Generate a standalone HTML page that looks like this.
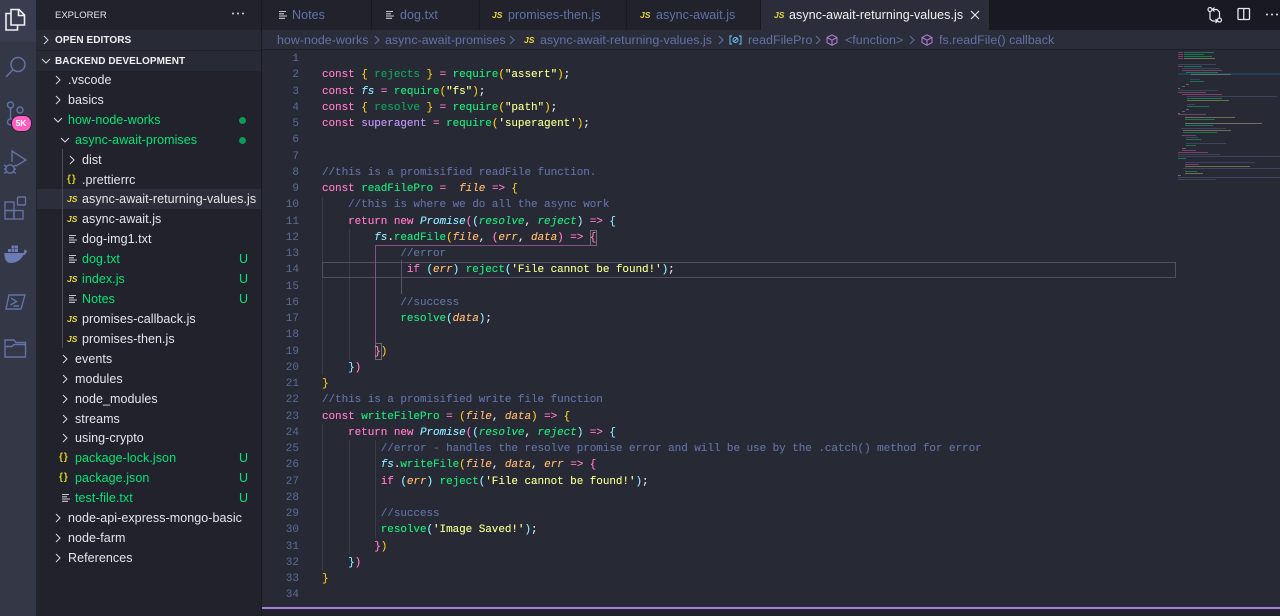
<!DOCTYPE html>
<html><head><meta charset="utf-8"><title>async-await-returning-values.js</title>
<style>
html,body{margin:0;padding:0;width:1280px;height:616px;overflow:hidden;background:#272935}
body{position:relative;font-family:"Liberation Sans",sans-serif}
div,span.a,svg.a{position:absolute}
#act{left:0;top:0;width:36px;height:616px;background:#343746}
#side{left:36px;top:0;width:226px;height:616px;background:#21222c;border-right:1px solid #191a21;box-sizing:border-box}
#tabs{left:262px;top:0;width:1018px;height:30px;background:#191a21}
.tab{top:0;height:30px;background:#21222c;border-right:1px solid #191a21;box-sizing:border-box;color:#6272a4;font-size:12.5px;letter-spacing:.06px;line-height:30px;white-space:pre}
.tab .t{position:absolute;top:0}
#crumb{left:262px;top:30px;width:1018px;height:20px;background:#2b2d3a;border-bottom:1px solid #1d1e27;box-sizing:border-box}
.c{position:absolute;top:0;line-height:20px;font-size:12.4px;letter-spacing:.04px;color:#6272a4;white-space:pre}
.r{left:36px;width:225px;height:20px;line-height:20px;font-size:12.5px;letter-spacing:.06px;color:#e6e6ea;white-space:pre}
.r .n{position:absolute;top:0}
.g{color:#00e676}
.st{position:absolute;left:203px;top:0;color:#00e676;font-size:12.5px}
.dot{position:absolute;left:203px;top:6.5px;width:7px;height:7px;border-radius:50%;background:#0c9a57}
.js{position:absolute;top:0;color:#e6d93a;font:bold 8.5px/20px "Liberation Sans",sans-serif;font-style:italic;letter-spacing:0}
.br{position:absolute;top:0;color:#d9cf1f;font:bold 10px/20px "Liberation Sans",sans-serif;letter-spacing:1px}
.hd{left:36px;width:225px;height:20px;background:#282a36;line-height:21px;font-size:10px;font-weight:bold;color:#f0f0f2;letter-spacing:.07px}
.ln{left:262px;width:37px;text-align:right;color:#5d6b9a;font:11px/16.25px "Liberation Mono",monospace}
.l{left:322px;height:16.25px;font:11px/16.25px "Liberation Mono",monospace;letter-spacing:-.07px;white-space:pre;color:#e8e8e8;text-shadow:0 0 .2px currentColor}
.k{color:#ff79c6}.f{color:#19e67a}.p{color:#ffb86c;font-style:italic}.s{color:#f1fa8c}.y{color:#f5c518}.cy{color:#8be9fd}.cyi{color:#8be9fd;font-style:italic}.v{color:#bd93f9}.dg{color:#10a05a}.cm{color:#5f6e9f}.gi{color:#19e67a;font-style:italic}
.ig{width:1px;background:#3a3c4a}
</style></head><body>
<svg width="0" height="0" style="position:absolute">
<defs>
<symbol id="cr" viewBox="0 0 10 10"><polyline points="3,1 7,5 3,9" fill="none" stroke="#d8d8de" stroke-width="1"/></symbol>
<symbol id="cd" viewBox="0 0 10 10"><polyline points="1,3 5,7 9,3" fill="none" stroke="#d8d8de" stroke-width="1"/></symbol>
<symbol id="tx" viewBox="0 0 10 10"><path d="M1 1.5h7M1 3.8h5M1 6h8M1 8.3h6" stroke="#c9c9cf" stroke-width="1.1" fill="none"/></symbol>
<symbol id="cube" viewBox="0 0 12 12"><path d="M6 .8 11 3.5V8.6L6 11.3 1 8.6V3.5ZM1 3.5 6 6.2 11 3.5M6 6.2V11.3" fill="none" stroke="#b57edc" stroke-width="1"/></symbol>
</defs></svg>

<div id="act">
<svg class="a" style="left:0;top:0" width="36" height="42"><rect width="36" height="42" fill="#3a3d4f"/><path d="M11 13.5H6V30H17.5V25M11 9.500H19L24.500 15V25H11ZM18.500 9.500V15.500H24.500" fill="none" stroke="#eeeef3" stroke-width="1.6"/></svg>
<svg class="a" style="left:0;top:50px" width="36" height="36"><circle cx="18" cy="14.500" r="7" fill="none" stroke="#6272a4" stroke-width="1.5"/><path d="M13 19.500 6 27" stroke="#6272a4" stroke-width="1.5"/></svg>
<svg class="a" style="left:0;top:98px" width="36" height="36"><g fill="none" stroke="#6272a4" stroke-width="1.4"><circle cx="10.5" cy="7" r="3"/><circle cx="20" cy="12" r="3"/><circle cx="10.5" cy="24" r="3"/><path d="M10.5 10V21"/></g></svg>
<div style="left:10.500px;top:115px;width:19px;height:15px;border-radius:8px;background:#ff5fc0;border:1px solid #23242e;color:#fff;font:bold 8.5px/15px 'Liberation Sans',sans-serif;text-align:center;box-sizing:content-box">5K</div>
<svg class="a" style="left:0;top:145px" width="36" height="36"><g fill="none" stroke="#6272a4" stroke-width="1.4"><path d="M12 17V6L26 15 16 21"/><circle cx="10" cy="24" r="4.2"/><path d="M4 20 7 22M4 24H6M4 28.5 7 26.5M16 20 13 22M16 24H14M16 28.5 13 26.5"/></g></svg>
<svg class="a" style="left:0;top:195px" width="36" height="30"><g fill="none" stroke="#6272a4" stroke-width="1.4"><rect x="5" y="7" width="9" height="8.5"/><rect x="5" y="15.5" width="9" height="8.5"/><rect x="14" y="15.5" width="9" height="8.5"/><rect x="17.5" y="2" width="8" height="8" rx="1"/></g></svg>
<svg class="a" style="left:0;top:240px" width="36" height="30"><path d="M4.5 13H22.5C24 13.5 24.5 12 24 10.5L25 9.5C26.500 10.500 27 11 27 11.500C25.800 14.500 24 15 23 15.500C21 20 16 23 11 23C6 23 4 18 4.500 13Z" fill="#6a7bb5"/><g fill="#6a7bb5"><rect x="8" y="9" width="3" height="3"/><rect x="11.500" y="9" width="3" height="3"/><rect x="15" y="9" width="3" height="3"/><rect x="11.500" y="5.500" width="3" height="3"/><rect x="15" y="5.500" width="3" height="3"/></g></svg>
<svg class="a" style="left:0;top:292px" width="36" height="30"><g fill="none" stroke="#6272a4" stroke-width="1.4"><path d="M9 3H25L21 17H6Z"/><path d="M11 6 16.500 9.500 10.500 13M13.500 14H19"/></g></svg>
<svg class="a" style="left:0;top:335px" width="36" height="30"><g fill="none" stroke="#6272a4" stroke-width="1.4"><path d="M5 8V5H14L16 7.500H25.500V22H5ZM5 11.500H12L14 9.500H25.500"/></g></svg>
</div>

<div id="side"></div>
<div style="left:55px;top:10px;color:#e4e4e8;font-size:9.5px;line-height:12px">EXPLORER</div>
<svg class="a" style="left:231px;top:11px" width="14" height="5"><g fill="#d8d8de"><circle cx="2" cy="2.500" r="1"/><circle cx="7" cy="2.500" r="1"/><circle cx="12" cy="2.500" r="1"/></g></svg>
<div class="hd" style="top:30px"><svg class="a" style="left:5px;top:5px" width="10" height="10"><use href="#cr"/></svg><span style="position:absolute;left:19px">OPEN EDITORS</span></div>
<div class="hd" style="top:51px"><svg class="a" style="left:5px;top:5px" width="10" height="10"><use href="#cd"/></svg><span style="position:absolute;left:19px">BACKEND DEVELOPMENT</span></div>

<div style="left:37px;top:189px;width:224px;height:20px;background:#2c2e3b"></div>
<div style="left:62px;top:149px;width:1px;height:199px;background:#4a4c5a"></div>

<div class="r" style="top:70px"><svg class="a" style="left:17px;top:5px" width="10" height="10"><use href="#cr"/></svg><span class="n" style="left:32px">.vscode</span></div>
<div class="r" style="top:90px"><svg class="a" style="left:17px;top:5px" width="10" height="10"><use href="#cr"/></svg><span class="n" style="left:32px">basics</span></div>
<div class="r" style="top:110px"><svg class="a" style="left:17px;top:5px" width="10" height="10"><use href="#cd"/></svg><span class="n g" style="left:32px">how-node-works</span><span class="dot"></span></div>
<div class="r" style="top:130px"><svg class="a" style="left:24px;top:5px" width="10" height="10"><use href="#cd"/></svg><span class="n g" style="left:39px">async-await-promises</span><span class="dot"></span></div>
<div class="r" style="top:150px"><svg class="a" style="left:31px;top:5px" width="10" height="10"><use href="#cr"/></svg><span class="n" style="left:46px">dist</span></div>
<div class="r" style="top:170px"><span class="br" style="left:31px">{}</span><span class="n" style="left:46px">.prettierrc</span></div>
<div class="r" style="top:189px"><span class="js" style="left:31px">JS</span><span class="n" style="left:46px">async-await-returning-values.js</span></div>
<div class="r" style="top:209px"><span class="js" style="left:31px">JS</span><span class="n" style="left:46px">async-await.js</span></div>
<div class="r" style="top:229px"><svg class="a" style="left:32px;top:5px" width="10" height="10"><use href="#tx"/></svg><span class="n" style="left:46px">dog-img1.txt</span></div>
<div class="r" style="top:249px"><svg class="a" style="left:32px;top:5px" width="10" height="10"><use href="#tx"/></svg><span class="n g" style="left:46px">dog.txt</span><span class="st">U</span></div>
<div class="r" style="top:269px"><span class="js" style="left:31px">JS</span><span class="n g" style="left:46px">index.js</span><span class="st">U</span></div>
<div class="r" style="top:289px"><svg class="a" style="left:32px;top:5px" width="10" height="10"><use href="#tx"/></svg><span class="n g" style="left:46px">Notes</span><span class="st">U</span></div>
<div class="r" style="top:309px"><span class="js" style="left:31px">JS</span><span class="n" style="left:46px">promises-callback.js</span></div>
<div class="r" style="top:329px"><span class="js" style="left:31px">JS</span><span class="n" style="left:46px">promises-then.js</span></div>
<div class="r" style="top:349px"><svg class="a" style="left:24px;top:5px" width="10" height="10"><use href="#cr"/></svg><span class="n" style="left:39px">events</span></div>
<div class="r" style="top:369px"><svg class="a" style="left:24px;top:5px" width="10" height="10"><use href="#cr"/></svg><span class="n" style="left:39px">modules</span></div>
<div class="r" style="top:389px"><svg class="a" style="left:24px;top:5px" width="10" height="10"><use href="#cr"/></svg><span class="n" style="left:39px">node_modules</span></div>
<div class="r" style="top:409px"><svg class="a" style="left:24px;top:5px" width="10" height="10"><use href="#cr"/></svg><span class="n" style="left:39px">streams</span></div>
<div class="r" style="top:428px"><svg class="a" style="left:24px;top:5px" width="10" height="10"><use href="#cr"/></svg><span class="n" style="left:39px">using-crypto</span></div>
<div class="r" style="top:448px"><span class="br" style="left:23px">{}</span><span class="n g" style="left:39px">package-lock.json</span><span class="st">U</span></div>
<div class="r" style="top:468px"><span class="br" style="left:23px">{}</span><span class="n g" style="left:39px">package.json</span><span class="st">U</span></div>
<div class="r" style="top:488px"><svg class="a" style="left:25px;top:5px" width="10" height="10"><use href="#tx"/></svg><span class="n g" style="left:39px">test-file.txt</span><span class="st">U</span></div>
<div class="r" style="top:508px"><svg class="a" style="left:17px;top:5px" width="10" height="10"><use href="#cr"/></svg><span class="n" style="left:32px">node-api-express-mongo-basic</span></div>
<div class="r" style="top:528px"><svg class="a" style="left:17px;top:5px" width="10" height="10"><use href="#cr"/></svg><span class="n" style="left:32px">node-farm</span></div>
<div class="r" style="top:548px"><svg class="a" style="left:17px;top:5px" width="10" height="10"><use href="#cr"/></svg><span class="n" style="left:32px">References</span></div>

<div id="tabs"></div>
<div class="tab" style="left:262px;width:110px"><svg class="a" style="left:16px;top:10px" width="10" height="10"><use href="#tx"/></svg><span class="t" style="left:30px">Notes</span></div>
<div class="tab" style="left:372px;width:108px"><svg class="a" style="left:13px;top:10px" width="10" height="10"><use href="#tx"/></svg><span class="t" style="left:28px">dog.txt</span></div>
<div class="tab" style="left:480px;width:147px"><span class="js" style="left:12px;top:5px">JS</span><span class="t" style="left:28px">promises-then.js</span></div>
<div class="tab" style="left:627px;width:134px"><span class="js" style="left:13px;top:5px">JS</span><span class="t" style="left:29px">async-await.js</span></div>
<div class="tab" style="left:761px;width:229px;background:#2b2d3a;color:#f0f0f2"><span class="js" style="left:13px;top:5px">JS</span><span class="t" style="left:28px">async-await-returning-values.js</span><svg class="a" style="left:209px;top:10px" width="10" height="10"><path d="M1 1 9 9M9 1 1 9" stroke="#e8e8ec" stroke-width="1.1"/></svg></div>
<svg class="a" style="left:1206px;top:6px" width="18" height="18"><g fill="none" stroke="#e8e8ec" stroke-width="1.2"><circle cx="4" cy="3.500" r="2"/><circle cx="13.500" cy="14" r="2"/><path d="M4 5.500V13L6.500 15H11M6.500 3.500H11L13.500 6V12M8.500 1.500 6.500 3.500 8.500 5.500M9.500 13 11.500 15 9.500 17"/></g></svg>
<svg class="a" style="left:1237px;top:7px" width="15" height="15"><g fill="none" stroke="#e8e8ec" stroke-width="1.3"><rect x="1" y="1.500" width="11.500" height="11" rx="1"/><path d="M6.750 1.500V12.500"/></g></svg>
<svg class="a" style="left:1265px;top:12px" width="15" height="5"><g fill="#e8e8ec"><circle cx="2" cy="2.500" r="1"/><circle cx="7" cy="2.500" r="1"/><circle cx="12" cy="2.500" r="1"/></g></svg>

<div id="crumb">
<span class="c" style="left:15px">how-node-works</span>
<svg class="a" style="left:110px;top:5px" width="10" height="10"><polyline points="3,1 7,5 3,9" fill="none" stroke="#6272a4"/></svg>
<span class="c" style="left:123px">async-await-promises</span>
<svg class="a" style="left:245px;top:5px" width="10" height="10"><polyline points="3,1 7,5 3,9" fill="none" stroke="#6272a4"/></svg>
<span class="js" style="left:262px;top:0">JS</span>
<span class="c" style="left:278px">async-await-returning-values.js</span>
<svg class="a" style="left:454px;top:5px" width="10" height="10"><polyline points="3,1 7,5 3,9" fill="none" stroke="#6272a4"/></svg>
<svg class="a" style="left:467px;top:4px" width="13" height="12"><g fill="none" stroke="#6cc5f5" stroke-width="1"><path d="M3 2H1V10H3M10 2H12V10H10"/><circle cx="6.500" cy="6" r="2.500"/><path d="M4.500 8 8.500 4"/></g></svg>
<span class="c" style="left:486px">readFilePro</span>
<svg class="a" style="left:551px;top:5px" width="10" height="10"><polyline points="3,1 7,5 3,9" fill="none" stroke="#6272a4"/></svg>
<svg class="a" style="left:564px;top:4px" width="12" height="12"><use href="#cube"/></svg>
<span class="c" style="left:583px">&lt;function&gt;</span>
<svg class="a" style="left:645px;top:5px" width="10" height="10"><polyline points="3,1 7,5 3,9" fill="none" stroke="#6272a4"/></svg>
<svg class="a" style="left:659px;top:4px" width="12" height="12"><use href="#cube"/></svg>
<span class="c" style="left:677px">fs.readFile() callback</span>
</div>

<!-- guides -->
<div class="ig" style="left:322px;top:197px;height:178px"></div>
<div class="ig" style="left:349px;top:229px;height:131px"></div>
<div class="ig" style="left:322px;top:424px;height:147px"></div>
<div class="ig" style="left:349px;top:440px;height:114px"></div>
<div class="ig" style="left:375px;top:440px;height:98px"></div>
<div class="ig" style="left:401px;top:260px;height:34px;background:#55566a"></div>
<div style="left:322px;top:262px;width:852px;height:14px;border:1px solid #4e5062"></div>
<div style="left:375px;top:245px;width:1px;height:105px;background:#8a4f8a"></div>
<div style="left:375px;top:244.500px;width:222px;height:1px;background:#8a4f8a"></div>
<div style="left:590px;top:230px;width:5px;height:14px;border:1px solid #6c6e74"></div>
<div style="left:375px;top:343px;width:5px;height:15px;border:1px solid #6c6e74"></div>

<div style="left:0;top:1px;width:1280px;height:600px">
<!-- line numbers -->
<div class="ln" style="top:50px">1</div><div class="ln" style="top:66.250px">2</div><div class="ln" style="top:82.500px">3</div><div class="ln" style="top:98.750px">4</div><div class="ln" style="top:115px">5</div><div class="ln" style="top:131.250px">6</div><div class="ln" style="top:147.500px">7</div><div class="ln" style="top:163.750px">8</div><div class="ln" style="top:180px">9</div><div class="ln" style="top:196.250px">10</div><div class="ln" style="top:212.500px">11</div><div class="ln" style="top:228.750px">12</div><div class="ln" style="top:245px">13</div><div class="ln" style="top:261.250px">14</div><div class="ln" style="top:277.500px">15</div><div class="ln" style="top:293.750px">16</div><div class="ln" style="top:310px">17</div><div class="ln" style="top:326.250px">18</div><div class="ln" style="top:342.500px">19</div><div class="ln" style="top:358.750px">20</div><div class="ln" style="top:375px">21</div><div class="ln" style="top:391.250px">22</div><div class="ln" style="top:407.500px">23</div><div class="ln" style="top:423.750px">24</div><div class="ln" style="top:440px">25</div><div class="ln" style="top:456.250px">26</div><div class="ln" style="top:472.500px">27</div><div class="ln" style="top:488.750px">28</div><div class="ln" style="top:505px">29</div><div class="ln" style="top:521.250px">30</div><div class="ln" style="top:537.500px">31</div><div class="ln" style="top:553.750px">32</div><div class="ln" style="top:570px">33</div><div class="ln" style="top:586.250px">34</div>

<!-- code -->
<div class="l" style="top:66.250px"><span class="k">const</span> <span class="y">{</span> <span class="dg">rejects</span> <span class="y">}</span> <span class="k">=</span> <span class="f">require</span><span class="y">(</span><span class="s">"assert"</span><span class="y">)</span>;</div>
<div class="l" style="top:82.500px"><span class="k">const</span> <span class="cyi">fs</span> <span class="k">=</span> <span class="f">require</span><span class="y">(</span><span class="s">"fs"</span><span class="y">)</span>;</div>
<div class="l" style="top:98.750px"><span class="k">const</span> <span class="y">{</span> <span class="dg">resolve</span> <span class="y">}</span> <span class="k">=</span> <span class="f">require</span><span class="y">(</span><span class="s">"path"</span><span class="y">)</span>;</div>
<div class="l" style="top:115px"><span class="k">const</span> <span class="v">superagent</span> <span class="k">=</span> <span class="f">require</span><span class="y">(</span><span class="s">'superagent'</span><span class="y">)</span>;</div>
<div class="l cm" style="top:163.750px">//this is a promisified readFile function.</div>
<div class="l" style="top:180px"><span class="k">const</span> <span class="f">readFilePro</span> <span class="k">=</span>  <span class="p">file</span> <span class="k">=&gt;</span> <span class="y">{</span></div>
<div class="l cm" style="top:196.250px">    //this is where we do all the async work</div>
<div class="l" style="top:212.500px">    <span class="k">return new</span> <span class="cyi">Promise</span><span class="k">(</span><span class="cy">(</span><span class="gi">resolve</span>, <span class="gi">reject</span><span class="cy">)</span> <span class="k">=&gt;</span> <span class="cy">{</span></div>
<div class="l" style="top:228.750px">        <span class="cyi">fs</span>.<span class="f">readFile</span><span class="y">(</span><span class="p">file</span>, <span class="k">(</span><span class="p">err</span>, <span class="p">data</span><span class="k">)</span> <span class="k">=&gt;</span> <span class="k">{</span></div>
<div class="l cm" style="top:245px">            //error</div>
<div class="l" style="top:261.250px">             <span class="k">if</span> <span class="cy">(</span><span class="p">err</span><span class="cy">)</span> <span class="f">reject</span><span class="cy">(</span><span class="s">'File cannot be found!'</span><span class="cy">)</span>;</div>
<div class="l cm" style="top:293.750px">            //success</div>
<div class="l" style="top:310px">            <span class="f">resolve</span><span class="cy">(</span><span class="p">data</span><span class="cy">)</span>;</div>
<div class="l" style="top:342.500px">        <span class="k">}</span><span class="y">)</span></div>
<div class="l" style="top:358.750px">    <span class="cy">}</span><span class="k">)</span></div>
<div class="l" style="top:375px"><span class="y">}</span></div>
<div class="l cm" style="top:391.250px">//this is a promisified write file function</div>
<div class="l" style="top:407.500px"><span class="k">const</span> <span class="f">writeFilePro</span> <span class="k">=</span> <span class="y">(</span><span class="p">file</span>, <span class="p">data</span><span class="y">)</span> <span class="k">=&gt;</span> <span class="y">{</span></div>
<div class="l" style="top:423.750px">    <span class="k">return new</span> <span class="cyi">Promise</span><span class="k">(</span><span class="cy">(</span><span class="gi">resolve</span>, <span class="gi">reject</span><span class="cy">)</span> <span class="k">=&gt;</span> <span class="cy">{</span></div>
<div class="l cm" style="top:440px">         //error - handles the resolve promise error and will be use by the .catch() method for error</div>
<div class="l" style="top:456.250px">         <span class="cyi">fs</span>.<span class="f">writeFile</span><span class="y">(</span><span class="p">file</span>, <span class="p">data</span>, <span class="p">err</span> <span class="k">=&gt;</span> <span class="k">{</span></div>
<div class="l" style="top:472.500px">         <span class="k">if</span> <span class="cy">(</span><span class="p">err</span><span class="cy">)</span> <span class="f">reject</span><span class="cy">(</span><span class="s">'File cannot be found!'</span><span class="cy">)</span>;</div>
<div class="l cm" style="top:505px">         //success</div>
<div class="l" style="top:521.250px">         <span class="f">resolve</span><span class="cy">(</span><span class="s">'Image Saved!'</span><span class="cy">)</span>;</div>
<div class="l" style="top:537.500px">        <span class="k">}</span><span class="y">)</span></div>
<div class="l" style="top:553.750px">    <span class="cy">}</span><span class="k">)</span></div>
<div class="l" style="top:570px"><span class="y">}</span></div>
</div>

<!-- minimap -->
<svg class="a" style="left:1178px;top:50px" width="102" height="135">
<rect x="0" y="23" width="102" height="2" fill="#1f4058"/>
<g opacity=".6" style="filter:blur(.35px)">
<rect x="0" y="2" width="5" height="1" fill="#b0508f"/><rect x="6" y="2" width="30" height="1" fill="#15a860"/>
<rect x="0" y="4" width="5" height="1" fill="#b0508f"/><rect x="6" y="4" width="20" height="1" fill="#15a860"/>
<rect x="0" y="6" width="5" height="1" fill="#b0508f"/><rect x="6" y="6" width="28" height="1" fill="#15a860"/>
<rect x="0" y="8" width="5" height="1" fill="#b0508f"/><rect x="6" y="8" width="31" height="1" fill="#9aa060"/>
<rect x="0" y="14" width="38" height="1" fill="#4a5578"/>
<rect x="0" y="16" width="5" height="1" fill="#b0508f"/><rect x="6" y="16" width="18" height="1" fill="#15a860"/>
<rect x="4" y="18" width="38" height="1" fill="#4a5578"/>
<rect x="4" y="20" width="40" height="1" fill="#b0508f"/>
<rect x="8" y="22" width="32" height="1" fill="#15a860"/>
<rect x="13" y="24" width="40" height="1" fill="#8a9070"/>
<rect x="12" y="29" width="10" height="1" fill="#4a5578"/>
<rect x="12" y="31" width="14" height="1" fill="#15a860"/>
<rect x="8" y="34" width="3" height="1" fill="#888"/><rect x="4" y="36" width="3" height="1" fill="#888"/><rect x="0" y="38" width="2" height="1" fill="#999"/>
<rect x="0" y="40" width="40" height="1" fill="#4a5578"/>
<rect x="0" y="42" width="28" height="1" fill="#b0508f"/>
<rect x="4" y="44" width="40" height="1" fill="#b0508f"/>
<rect x="9" y="46" width="90" height="1" fill="#4a5578"/>
<rect x="9" y="48" width="35" height="1" fill="#15a860"/>
<rect x="9" y="50" width="42" height="1" fill="#9aa060"/>
<rect x="9" y="54" width="8" height="1" fill="#4a5578"/>
<rect x="9" y="56" width="22" height="1" fill="#15a860"/>
<rect x="8" y="59" width="3" height="1" fill="#888"/><rect x="4" y="61" width="3" height="1" fill="#888"/><rect x="0" y="63" width="2" height="1" fill="#999"/>
<rect x="0" y="64" width="28" height="1" fill="#b0508f"/>
<rect x="7" y="67" width="50" height="1" fill="#9aa060"/>
<rect x="7" y="69" width="30" height="1" fill="#15a860"/>
<rect x="7" y="73" width="77" height="1" fill="#9fa080"/>
<rect x="7" y="75" width="28" height="1" fill="#15a860"/>
<rect x="3" y="78" width="45" height="1" fill="#4a5578"/>
<rect x="5" y="80" width="48" height="1" fill="#9aa060"/>
<rect x="5" y="82" width="34" height="1" fill="#15a860"/>
<rect x="4" y="85" width="14" height="1" fill="#b0508f"/>
<rect x="8" y="87" width="12" height="1" fill="#4a5578"/>
<rect x="8" y="89" width="15" height="1" fill="#15a860"/>
<rect x="8" y="93" width="40" height="1" fill="#4a5578"/>
<rect x="8" y="95" width="10" height="1" fill="#15a860"/>
<rect x="4" y="98" width="4" height="1" fill="#888"/>
<rect x="4" y="100" width="14" height="1" fill="#b0508f"/>
<rect x="0" y="102" width="30" height="1" fill="#b0508f"/>
<rect x="0" y="104" width="42" height="1" fill="#4a5578"/>
<rect x="0" y="106" width="102" height="1" fill="#4a5578"/>
<rect x="0" y="108" width="8" height="1" fill="#15a860"/>
<rect x="7" y="112" width="70" height="1" fill="#4a5578"/>
<rect x="7" y="114" width="14" height="1" fill="#b0508f"/>
<rect x="7" y="116" width="65" height="1" fill="#9aa060"/>
<rect x="5" y="118" width="97" height="1" fill="#4a5578"/>
<rect x="7" y="121" width="12" height="1" fill="#15a860"/>
<rect x="7" y="123" width="18" height="1" fill="#9aa060"/>
<rect x="0" y="125" width="3" height="1" fill="#999"/>
<rect x="0" y="127" width="102" height="1" fill="#4a5578"/>
<rect x="0" y="129" width="38" height="1" fill="#4a5578"/>
</g></svg>

<div style="left:262px;top:608px;width:1018px;height:8px;background:#21222c"></div>
<div style="left:262px;top:607px;width:1018px;height:2px;background:#a77ee0"></div>
</body></html>
